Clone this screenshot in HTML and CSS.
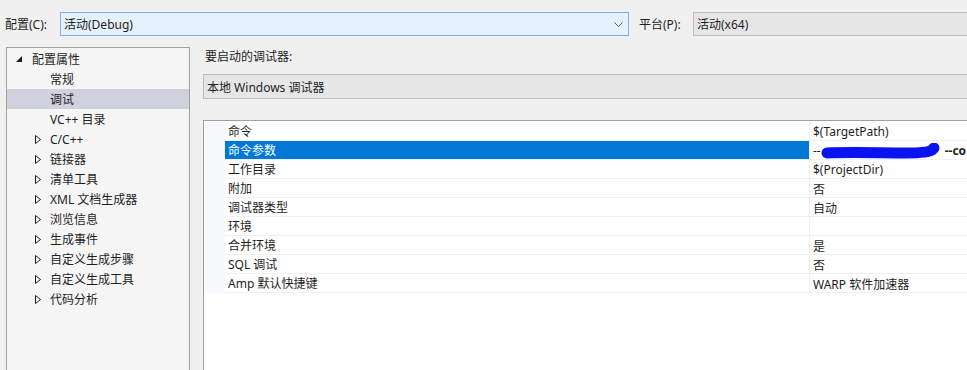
FILE: index.html
```html
<!DOCTYPE html>
<html lang="zh-CN">
<head>
    <meta charset="UTF-8">
    <title>调试 属性页</title>
    <link rel="stylesheet" href="styles.css">
</head>
<body>
    <div class="topbar">
        <span class="top-label">配置(C):</span>
        <div class="combo combo-config">
            <span>活动(Debug)</span>
            <svg class="chevron" width="9" height="5" viewBox="0 0 9 5"><path d="M0.5 0.5 L4.5 4.5 L8.5 0.5" fill="none" stroke="#606060" stroke-width="1"/></svg>
        </div>
        <span class="top-label platform-label">平台(P):</span>
        <div class="combo combo-platform">
            <span>活动(x64)</span>
        </div>
    </div>

    <div class="main">
        <ul class="tree">
            <li class="root">
                <span class="twisty"><svg width="6" height="6" viewBox="0 0 6 6"><polygon points="6,0 6,6 0,6" fill="#1e1e1e"/></svg></span>
                配置属性
            </li>
            <li class="child"><span class="twisty"></span>常规</li>
            <li class="child selected"><span class="twisty"></span>调试</li>
            <li class="child"><span class="twisty"></span>VC++ 目录</li>
            <li class="child"><span class="twisty"><svg width="6" height="9" viewBox="0 0 6 9"><polygon points="0.5,0.5 5.5,4.5 0.5,8.5" fill="none" stroke="#1e1e1e"/></svg></span>C/C++</li>
            <li class="child"><span class="twisty"><svg width="6" height="9" viewBox="0 0 6 9"><polygon points="0.5,0.5 5.5,4.5 0.5,8.5" fill="none" stroke="#1e1e1e"/></svg></span>链接器</li>
            <li class="child"><span class="twisty"><svg width="6" height="9" viewBox="0 0 6 9"><polygon points="0.5,0.5 5.5,4.5 0.5,8.5" fill="none" stroke="#1e1e1e"/></svg></span>清单工具</li>
            <li class="child"><span class="twisty"><svg width="6" height="9" viewBox="0 0 6 9"><polygon points="0.5,0.5 5.5,4.5 0.5,8.5" fill="none" stroke="#1e1e1e"/></svg></span>XML 文档生成器</li>
            <li class="child"><span class="twisty"><svg width="6" height="9" viewBox="0 0 6 9"><polygon points="0.5,0.5 5.5,4.5 0.5,8.5" fill="none" stroke="#1e1e1e"/></svg></span>浏览信息</li>
            <li class="child"><span class="twisty"><svg width="6" height="9" viewBox="0 0 6 9"><polygon points="0.5,0.5 5.5,4.5 0.5,8.5" fill="none" stroke="#1e1e1e"/></svg></span>生成事件</li>
            <li class="child"><span class="twisty"><svg width="6" height="9" viewBox="0 0 6 9"><polygon points="0.5,0.5 5.5,4.5 0.5,8.5" fill="none" stroke="#1e1e1e"/></svg></span>自定义生成步骤</li>
            <li class="child"><span class="twisty"><svg width="6" height="9" viewBox="0 0 6 9"><polygon points="0.5,0.5 5.5,4.5 0.5,8.5" fill="none" stroke="#1e1e1e"/></svg></span>自定义生成工具</li>
            <li class="child"><span class="twisty"><svg width="6" height="9" viewBox="0 0 6 9"><polygon points="0.5,0.5 5.5,4.5 0.5,8.5" fill="none" stroke="#1e1e1e"/></svg></span>代码分析</li>
        </ul>

        <div class="pane">
            <div class="pane-label">要启动的调试器:</div>
            <div class="combo combo-debugger">本地 Windows 调试器</div>

            <div class="grid">
                <div class="row"><div class="margin"></div><div class="name">命令</div><div class="value">$(TargetPath)</div></div>
                <div class="row selected"><div class="margin"></div><div class="name">命令参数</div><div class="value">--<svg class="scribble" width="120" height="16" viewBox="0 0 120 16"><path d="M6 10 C30 9 60 10 86 10 C100 10 108 9 111 7 L113 5" fill="none" stroke="#0a14f0" stroke-width="11" stroke-linecap="round"/></svg><b>--co</b></div></div>
                <div class="row"><div class="margin"></div><div class="name">工作目录</div><div class="value">$(ProjectDir)</div></div>
                <div class="row"><div class="margin"></div><div class="name">附加</div><div class="value">否</div></div>
                <div class="row"><div class="margin"></div><div class="name">调试器类型</div><div class="value">自动</div></div>
                <div class="row"><div class="margin"></div><div class="name">环境</div><div class="value"></div></div>
                <div class="row"><div class="margin"></div><div class="name">合并环境</div><div class="value">是</div></div>
                <div class="row"><div class="margin"></div><div class="name">SQL 调试</div><div class="value">否</div></div>
                <div class="row"><div class="margin"></div><div class="name">Amp 默认快捷键</div><div class="value">WARP 软件加速器</div></div>
            </div>
        </div>
    </div>
</body>
</html>
```

FILE: styles.css
```css
body {
    margin: 0;
    width: 967px;
    height: 370px;
    overflow: hidden;
    background-color: #f0f0f0;
    color: #1e1e1e;
    font-family: "Segoe UI", "Noto Sans", "Noto Sans CJK SC", sans-serif;
    font-size: 12px;
}

.topbar {
    display: flex;
    align-items: center;
    height: 24px;
    padding: 12px 0 0 5px;
    white-space: nowrap;
}

.top-label {
    width: 55px;
}

.platform-label {
    width: 54px;
    margin-left: 10px;
}

.combo {
    box-sizing: border-box;
    display: flex;
    align-items: center;
    height: 24px;
    padding-left: 3px;
    white-space: nowrap;
}

.combo-config {
    width: 569px;
    background-color: #e5f1fb;
    border: 1px solid #7eb4ea;
    justify-content: space-between;
}

.chevron {
    margin-right: 5px;
}

.combo-platform {
    flex: 1;
    background-color: #e6e6e6;
    border: 1px solid #bcbcbc;
    border-right: none;
}

.main {
    display: flex;
    margin-top: 11px;
}

.tree {
    box-sizing: border-box;
    width: 184px;
    height: 340px;
    margin: 0 0 0 6px;
    padding: 1px 0 0;
    list-style: none;
    background-color: #f5f5f5;
    border: 1px solid #a0a0a0;
}

.tree li {
    display: flex;
    align-items: center;
    height: 20px;
    white-space: nowrap;
}

.tree .root {
    padding-left: 9px;
}

.tree .root .twisty {
    width: 16px;
}

.tree .child {
    padding-left: 28px;
}

.tree .child .twisty {
    width: 15px;
}

.twisty {
    display: flex;
    align-items: center;
}

.tree .selected {
    background-color: #cfd1dd;
}

.pane {
    flex: 1;
    display: flex;
    flex-direction: column;
    margin-left: 13px;
}

.pane-label {
    height: 18px;
    line-height: 18px;
    margin-top: 1px;
    padding-left: 2px;
}

.combo-debugger {
    height: 25px;
    margin-top: 8px;
    background-color: #e6e6e6;
    border: 1px solid #bcbcbc;
    border-right: none;
}

.grid {
    height: 260px;
    margin-top: 21px;
    padding-top: 1px;
    background-color: #fff;
    border-top: 1px solid #a0a0a0;
    border-left: 1px solid #a0a0a0;
}

.row {
    display: flex;
    height: 19px;
    white-space: nowrap;
}

.margin {
    width: 21px;
    background-color: #f7f9fc;
}

.name {
    box-sizing: border-box;
    width: 584px;
    padding-left: 3px;
    line-height: 20px;
    border-bottom: 1px solid #f0f0f0;
}

.value {
    flex: 1;
    display: flex;
    align-items: center;
    box-sizing: border-box;
    height: 19px;
    padding: 1px 0 0 3px;
    border-left: 1px solid #f0f0f0;
    border-bottom: 1px solid #f0f0f0;
}

.row.selected .name {
    background-color: #0078d7;
    color: #fff;
}

.value b {
    margin-left: 4px;
}
```
